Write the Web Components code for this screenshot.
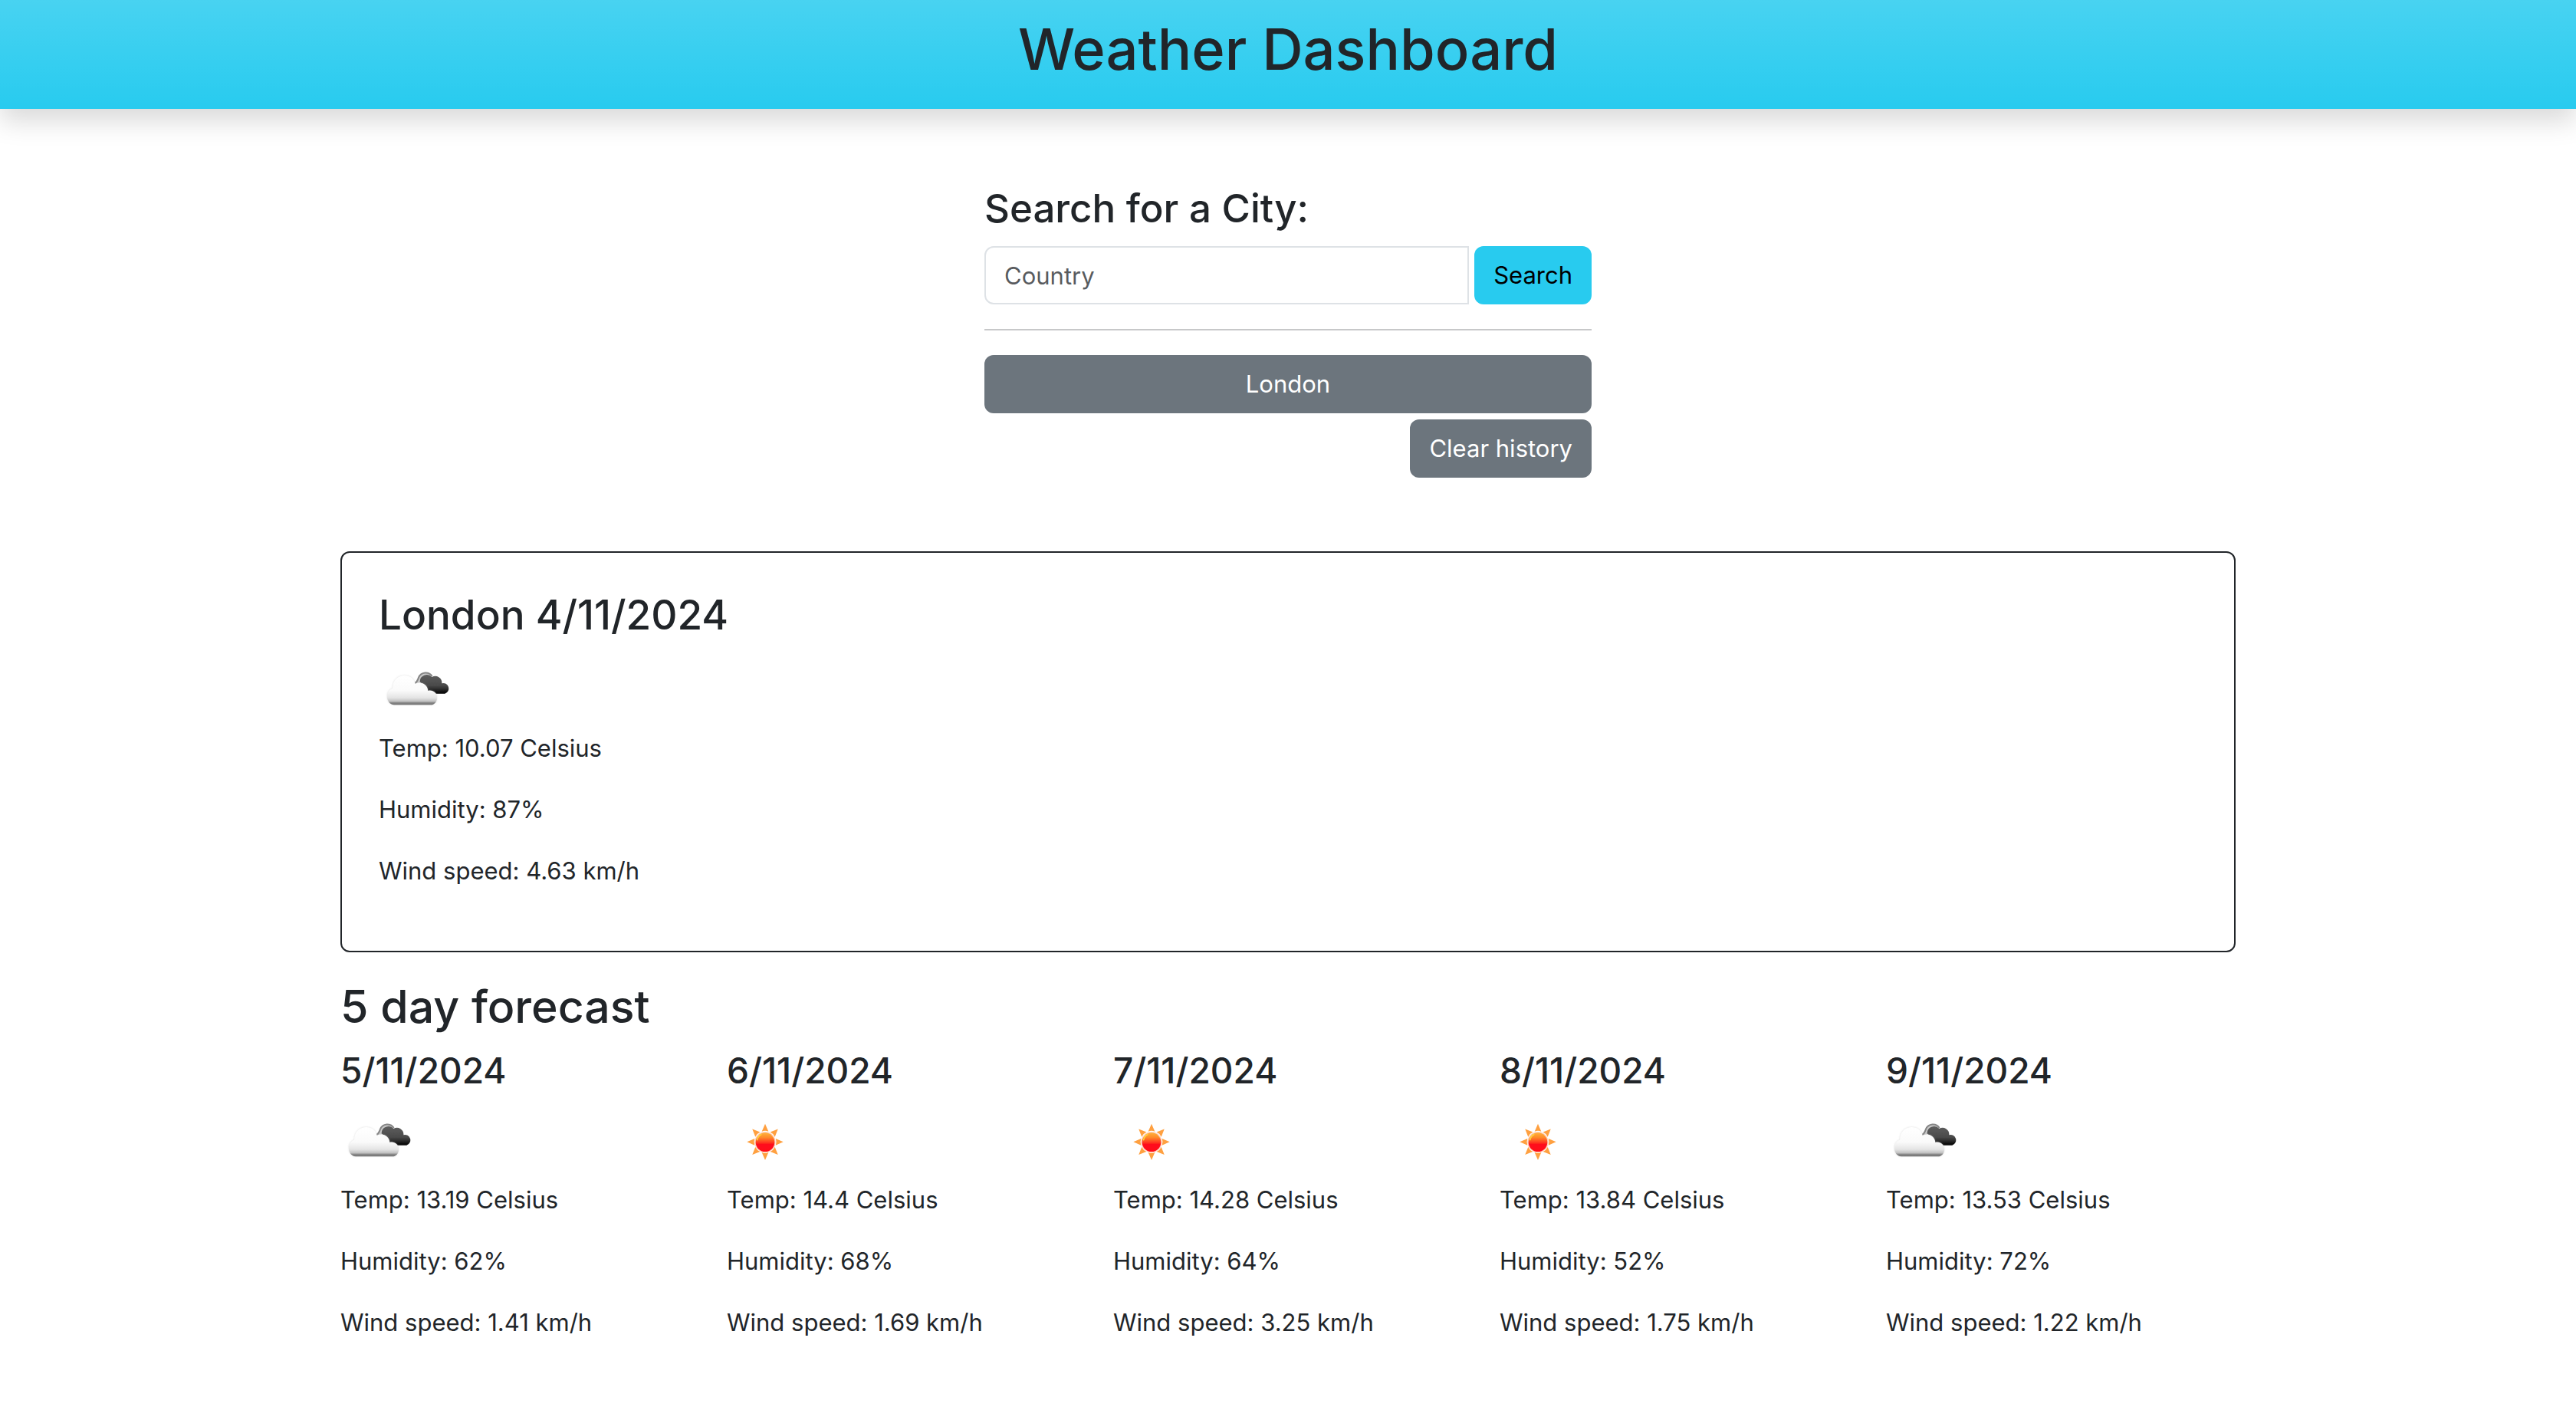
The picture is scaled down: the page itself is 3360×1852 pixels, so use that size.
<!DOCTYPE html>
<html lang="en">
<head>
<meta charset="utf-8">
<meta name="viewport" content="width=device-width, initial-scale=1">
<title>Weather Dashboard</title>
<style>
  :root {
    --accent: #28cbef;
    --secondary: #6c757d;
    --ink: #212529;
    --line: #dee2e6;
    --space: 16px;
    --gutter: 24px;
    --radius: 12px;
  }
  body {
    margin: 0;
    background: #fff;
    color: var(--ink);
    font: 400 31px/48px Inter, "Liberation Sans", sans-serif;
  }
</style>
</head>
<body>
<weather-app></weather-app>

<template id="weather-app">
  <style>
    :host { display: block; }
    main { display: flex; flex-direction: column; align-items: center; gap: 96px; padding: 96px 0; }
    city-search { width: 25%; }
    .results { width: 75%; box-sizing: border-box; padding: 0 var(--gutter); }
    h2 { margin: 32px 0 var(--space); font-size: 59px; line-height: 77px; font-weight: 500; }
    .days { display: grid; grid-template-columns: repeat(5, minmax(0, 1fr)); gap: 48px; }
    .today { display: block; border: 2px solid var(--ink); border-radius: var(--radius); padding: 48px; --title-size: 53px; --title-line: 67px; }
  </style>
  <app-header>Weather Dashboard</app-header>
  <main>
    <city-search></city-search>
    <div class="results">
      <weather-report class="today" icon="cloud" temp="10.07" humidity="87" wind="4.63">London 4/11/2024</weather-report>
      <h2>5 day forecast</h2>
      <div class="days">
        <weather-report icon="cloud" temp="13.19" humidity="62" wind="1.41">5/11/2024</weather-report>
        <weather-report icon="sun" temp="14.4" humidity="68" wind="1.69">6/11/2024</weather-report>
        <weather-report icon="sun" temp="14.28" humidity="64" wind="3.25">7/11/2024</weather-report>
        <weather-report icon="sun" temp="13.84" humidity="52" wind="1.75">8/11/2024</weather-report>
        <weather-report icon="cloud" temp="13.53" humidity="72" wind="1.22">9/11/2024</weather-report>
      </div>
    </div>
  </main>
</template>

<template id="app-header">
  <style>
    :host {
      display: block;
      padding: var(--space) 0 30px;
      text-align: center;
      background: linear-gradient(180deg, rgba(255,255,255,.15), rgba(255,255,255,0)) var(--accent);
      box-shadow: 0 16px 32px rgba(0,0,0,.15);
    }
    h1 { margin: 0; font-size: 74px; line-height: 96px; font-weight: 500; }
  </style>
  <header><h1><slot></slot></h1></header>
</template>

<template id="city-search">
  <style>
    :host { display: block; box-sizing: border-box; padding: 0 var(--gutter); }
    label { display: block; margin-bottom: var(--space); font-size: 51px; line-height: 67px; font-weight: 500; }
    .row { display: flex; gap: 7px; }
    input {
      flex: 1; min-width: 0; box-sizing: border-box; height: 76px; padding: 12px 24px;
      border: 2px solid var(--line); border-radius: var(--radius) 0 0 var(--radius);
      background: #fff; color: var(--ink); font: inherit;
    }
    input::placeholder { color: rgba(33,37,41,.75); opacity: 1; }
    hr { margin: 32px 0; border: 0; border-top: 2px solid var(--ink); opacity: .25; }
    .history { display: flex; flex-direction: column; align-items: flex-end; gap: 8px; }
    .wide { align-self: stretch; }
  </style>
  <form onsubmit="return false">
    <label for="city">Search for a City:</label>
    <div class="row">
      <input id="city" type="text" placeholder="Country">
      <app-button variant="accent">Search</app-button>
    </div>
  </form>
  <hr>
  <div class="history">
    <app-button class="wide">London</app-button>
    <app-button>Clear history</app-button>
  </div>
</template>

<template id="app-button">
  <style>
    :host { display: block; }
    button {
      display: block; width: 100%; padding: 14px 25px; border: 0; border-radius: var(--radius);
      background: var(--secondary); color: #fff; font: inherit; cursor: pointer; white-space: nowrap;
    }
    :host([variant="accent"]) button { background: var(--accent); color: #000; }
  </style>
  <button type="button"><slot></slot></button>
</template>

<template id="weather-report">
  <style>
    :host { display: block; }
    h3 { margin: 0 0 var(--space); font-size: var(--title-size, 46px); line-height: var(--title-line, 58px); font-weight: 500; }
    p { margin: 0 0 32px; }
  </style>
  <h3><slot></slot></h3>
  <weather-icon></weather-icon>
  <p class="temp"></p>
  <p class="humidity"></p>
  <p class="wind"></p>
</template>

<template id="icon-cloud">
  <svg viewBox="12 -24 300 300" role="img" aria-label="Cloudy">
    <defs>
      <linearGradient id="dark" gradientUnits="userSpaceOnUse" x1="0" y1="55" x2="0" y2="134">
        <stop offset="0" stop-color="#606060"/><stop offset=".6" stop-color="#4a4a4a"/><stop offset=".8" stop-color="#282828"/><stop offset="1" stop-color="#000"/>
      </linearGradient>
      <linearGradient id="light" gradientUnits="userSpaceOnUse" x1="0" y1="65" x2="0" y2="179">
        <stop offset="0" stop-color="#fff"/><stop offset=".5" stop-color="#fafafa"/><stop offset=".75" stop-color="#e4e4e4"/><stop offset=".87" stop-color="#c0c0c0"/><stop offset=".92" stop-color="#858585"/><stop offset="1" stop-color="#707070"/>
      </linearGradient>
      <filter id="soft"><feGaussianBlur stdDeviation="1.8"/></filter>
      <filter id="rim"><feGaussianBlur stdDeviation="3"/></filter>
    </defs>
    <g filter="url(#soft)">
      <path d="M153 94C163 88 165 78 168 71A30 30 0 0 1 221 66L200 80L174 92Z" fill="#c8c8c8"/>
      <path d="M153 94C163 88 165 78 168 71A30 30 0 0 1 221 66" fill="none" stroke="#858585" stroke-width="6"/>
      <path d="M173 88A27 27 0 0 1 220 69A26 26 0 0 1 259 94A20 20 0 1 1 271 134H200L185 100Z" fill="url(#dark)"/>
    </g>
    <path d="M72 178C38 176 36 121 66 113C66 52 146 48 155 96C178 84 204 99 205 123C222 118 240 130 240 149C240 166 230 178 215 178Z" fill="#bbb" opacity=".5" filter="url(#rim)"/>
    <path d="M72 178C38 176 36 121 66 113C66 52 146 48 155 96C178 84 204 99 205 123C222 118 240 130 240 149C240 166 230 178 215 178Z" fill="url(#light)" filter="url(#soft)"/>
  </svg>
</template>

<template id="icon-sun">
  <svg viewBox="-6 -28 300 300" role="img" aria-label="Sunny">
    <defs>
      <linearGradient id="ball" x1="0" y1="0" x2="0" y2="1">
        <stop offset="0" stop-color="#ffb13a"/><stop offset=".25" stop-color="#ff8a2a"/><stop offset=".5" stop-color="#ff3e20"/><stop offset=".62" stop-color="#ff0f1b"/><stop offset="1" stop-color="#ff0b19"/>
      </linearGradient>
      <filter id="soft" x="-20%" y="-20%" width="140%" height="140%"><feGaussianBlur stdDeviation="2"/></filter>
      <path id="ray" d="M144 46L157 76Q144 71 131 76Z"/>
    </defs>
    <g filter="url(#soft)">
      <g fill="#ffa040">
        <use href="#ray"/>
        <use href="#ray" transform="rotate(45 144 117)"/>
        <use href="#ray" transform="rotate(90 144 117)"/>
        <use href="#ray" transform="rotate(135 144 117)"/>
        <use href="#ray" transform="rotate(180 144 117)"/>
        <use href="#ray" transform="rotate(225 144 117)"/>
        <use href="#ray" transform="rotate(270 144 117)"/>
        <use href="#ray" transform="rotate(315 144 117)"/>
      </g>
      <circle cx="144" cy="118" r="41" fill="#ffd0b8"/>
      <circle cx="144" cy="118" r="37" fill="url(#ball)"/>
      <path d="M113 109C115 98 120 92 128 88" fill="none" stroke="#ffd23c" stroke-width="5" stroke-linecap="round"/>
    </g>
  </svg>
</template>

<script>
  const fromTemplate = (host, id) => {
    const root = host.attachShadow({ mode: "open" });
    root.append(document.getElementById(id).content.cloneNode(true));
    return root;
  };

  class AppHeader extends HTMLElement {
    constructor() { super(); fromTemplate(this, "app-header"); }
  }
  class AppButton extends HTMLElement {
    constructor() { super(); fromTemplate(this, "app-button"); }
  }
  class CitySearch extends HTMLElement {
    constructor() { super(); fromTemplate(this, "city-search"); }
  }
  class WeatherIcon extends HTMLElement {
    static observedAttributes = ["name"];
    constructor() { super(); this.attachShadow({ mode: "open" }); }
    attributeChangedCallback(attribute, previous, name) {
      this.shadowRoot.innerHTML = "<style>:host{display:block;width:100px;height:100px}svg{display:block;width:100%;height:100%}</style>";
      this.shadowRoot.append(document.getElementById("icon-" + name).content.cloneNode(true));
    }
  }
  class WeatherReport extends HTMLElement {
    constructor() { super(); this.root = fromTemplate(this, "weather-report"); }
    connectedCallback() {
      const find = (selector) => this.root.querySelector(selector);
      find("weather-icon").setAttribute("name", this.getAttribute("icon"));
      find(".temp").textContent = `Temp: ${this.getAttribute("temp")} Celsius`;
      find(".humidity").textContent = `Humidity: ${this.getAttribute("humidity")}%`;
      find(".wind").textContent = `Wind speed: ${this.getAttribute("wind")} km/h`;
    }
  }
  class WeatherApp extends HTMLElement {
    constructor() { super(); fromTemplate(this, "weather-app"); }
  }

  customElements.define("weather-icon", WeatherIcon);
  customElements.define("weather-report", WeatherReport);
  customElements.define("app-button", AppButton);
  customElements.define("app-header", AppHeader);
  customElements.define("city-search", CitySearch);
  customElements.define("weather-app", WeatherApp);
</script>
</body>
</html>
